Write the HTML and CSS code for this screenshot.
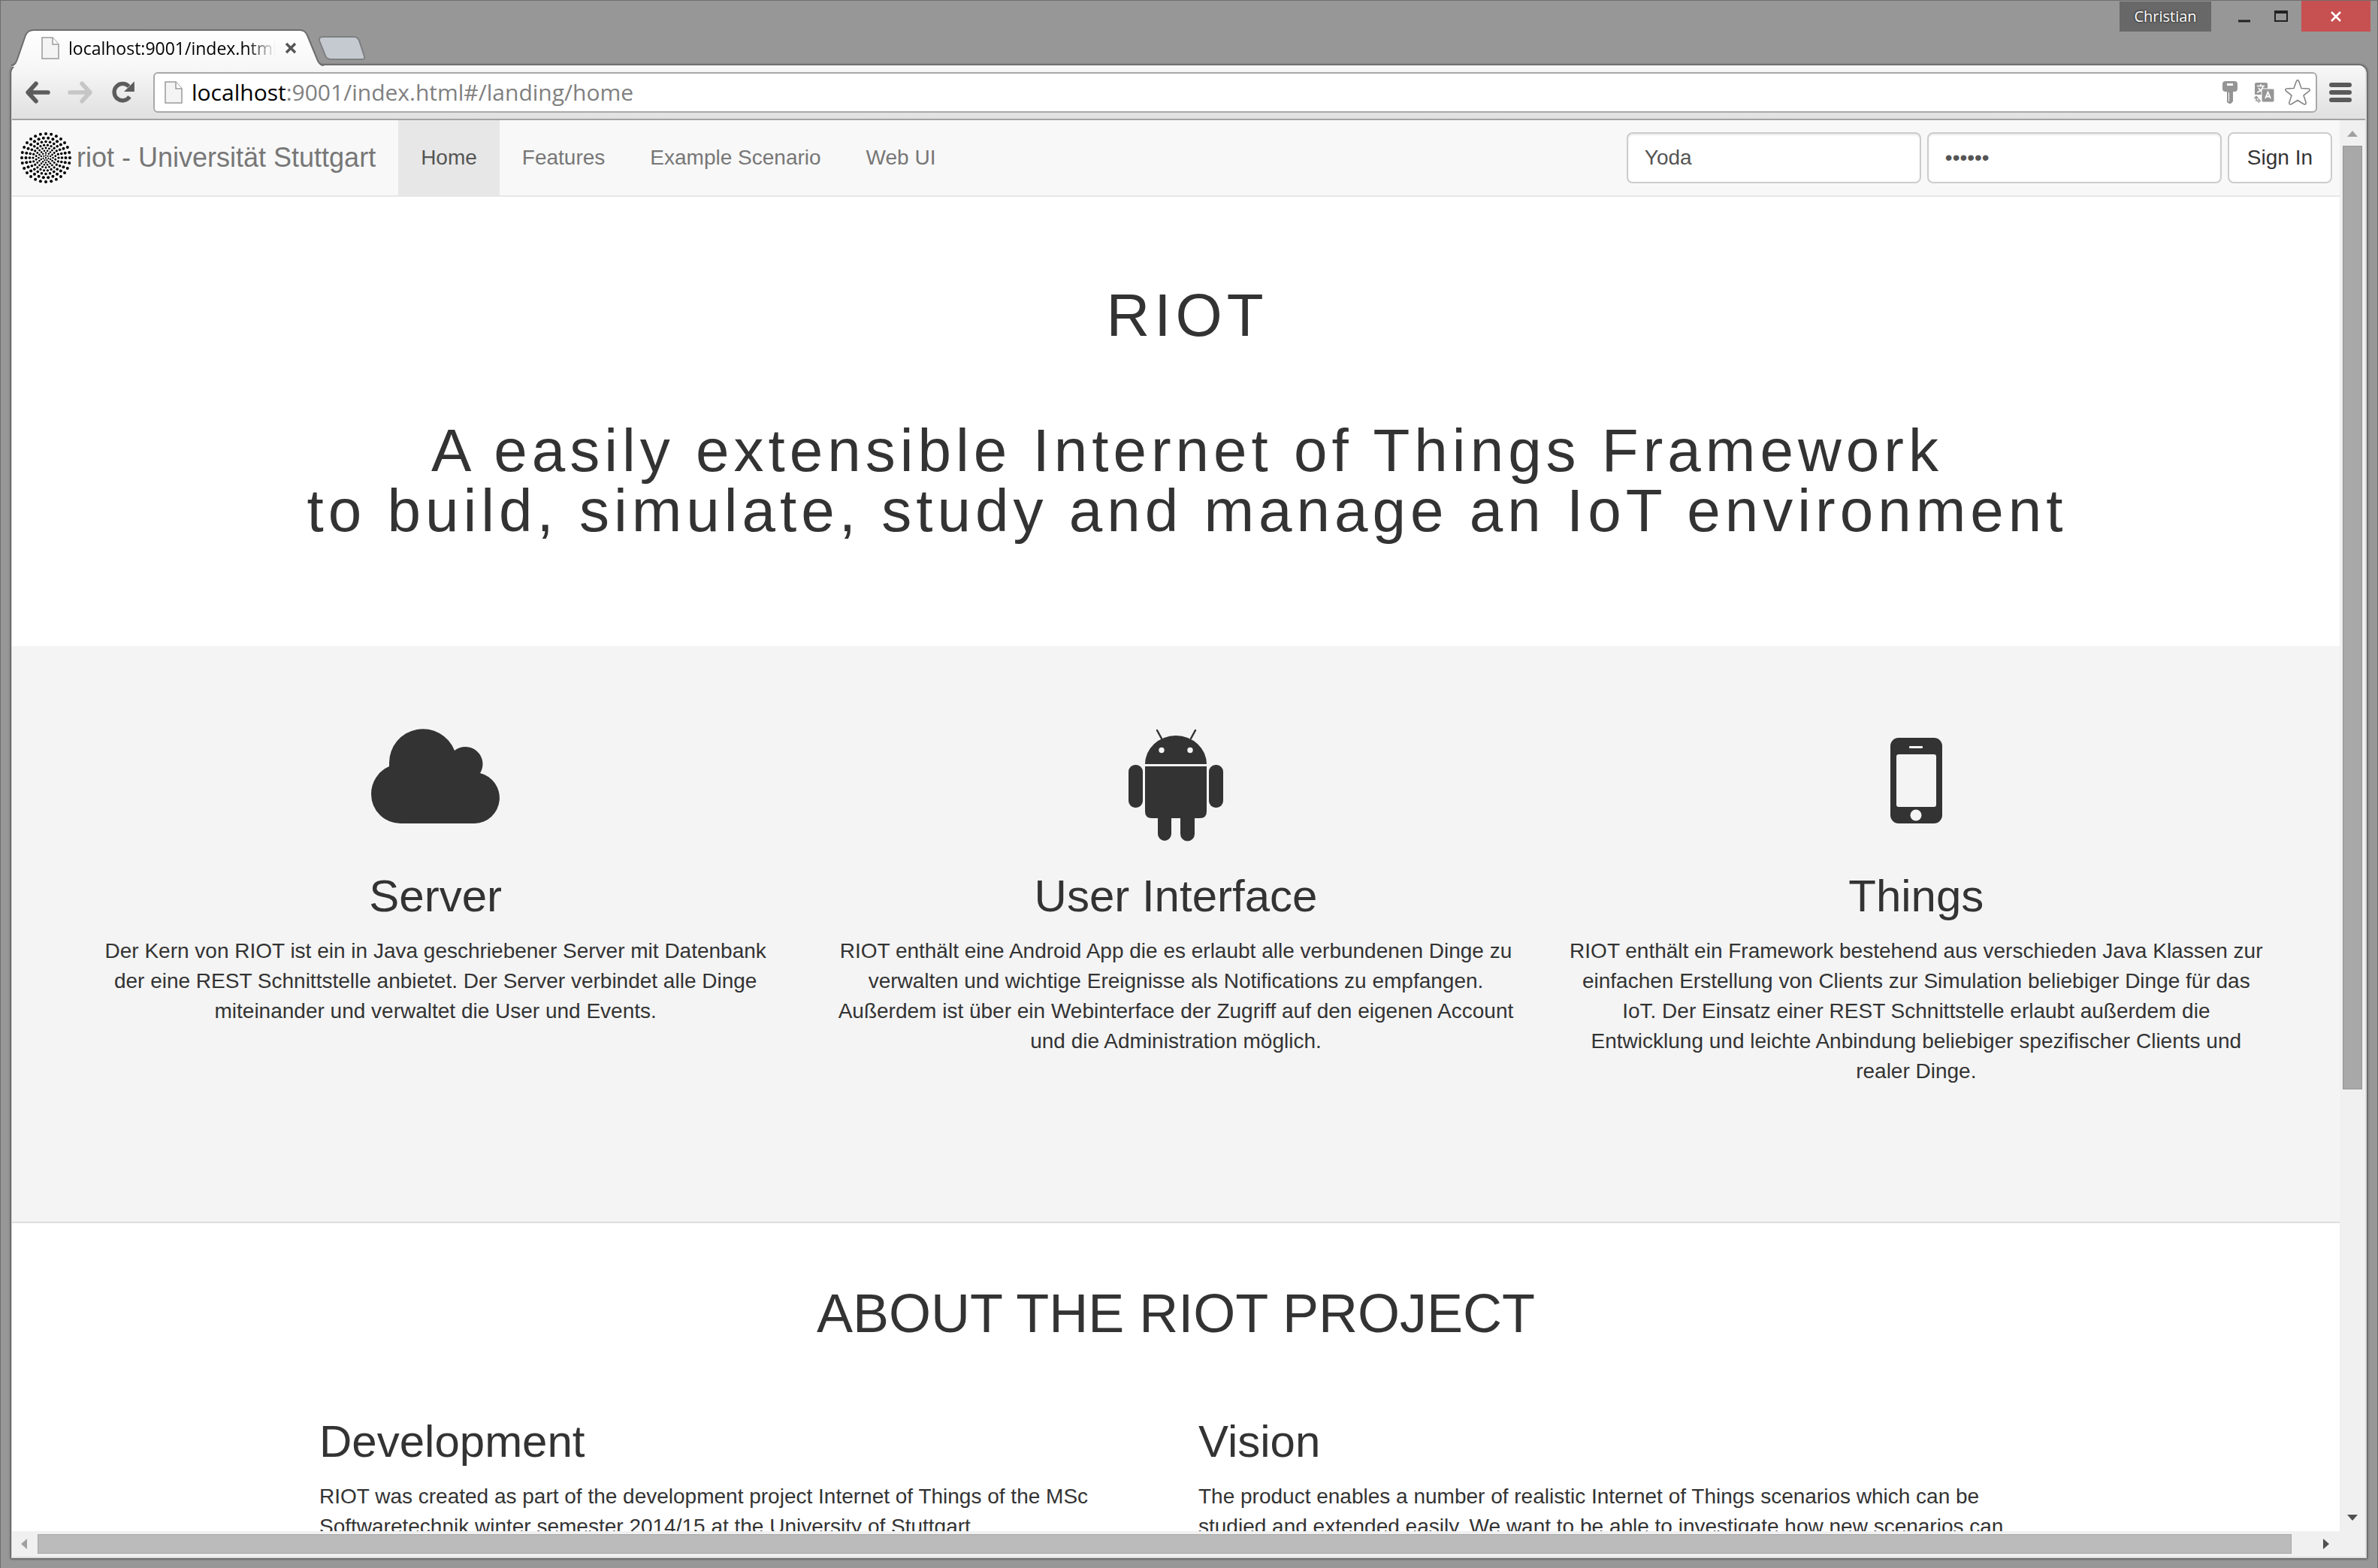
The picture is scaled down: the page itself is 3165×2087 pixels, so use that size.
FILE: index.html
```html
<!DOCTYPE html>
<html lang="de">
<head>
<meta charset="utf-8">
<title>riot - Universität Stuttgart</title>
<link rel="stylesheet" href="styles.css">
</head>
<body>
<div class="window">
  <header class="titlebar">
    <div class="tabs">
      <div class="tab">
        <svg class="tab-shape" viewBox="0 0 420 50" aria-hidden="true">
          <defs><linearGradient id="tabfill" x1="0" y1="0" x2="0" y2="1"><stop offset="0" stop-color="#fff"/><stop offset="1" stop-color="#f7f7f7"/></linearGradient></defs>
          <path d="M0 50C5 49 6 45 8 40L19 8Q22 1 30 1H384Q391 1 394 8L408 42Q411 49 416 50Z" fill="url(#tabfill)"/>
          <path d="M0 48C5 47 6 45 8 40L19 8Q22 1 30 1H384Q391 1 394 8L408 42Q411 48 416 48" fill="none" stroke="#6d6d6d" stroke-width="2"/>
        </svg>
        <svg class="page-icon" viewBox="0 0 24 30" aria-hidden="true"><path d="M1 1H15L23 10V29H1Z" fill="#f4f4f4" stroke="#9a9a9a" stroke-width="1.5"/><path d="M15 1V10H23" fill="#fff" stroke="#9a9a9a" stroke-width="1.5"/></svg>
        <span class="tab-title">localhost:9001/index.html#</span>
        <button class="tab-close" aria-label="Close tab"><svg viewBox="0 0 16 16"><path d="M2 2L14 14M14 2L2 14" stroke="#555" stroke-width="3.4"/></svg></button>
      </div>
      <button class="new-tab" aria-label="New tab"><svg viewBox="0 0 64 34"><path d="M7 2H48Q53 2 55 7L62 28Q63 32 59 32H18Q12 32 10 27L2 7Q1 2 7 2Z" fill="#c5cad1" stroke="#7d7f82" stroke-width="2"/></svg></button>
    </div>
    <div class="controls">
      <button class="user">Christian</button>
      <button class="ctl minimize" aria-label="Minimize"><svg viewBox="0 0 18 18"><path d="M1 16H17" stroke="#222" stroke-width="3"/></svg></button>
      <button class="ctl maximize" aria-label="Maximize"><svg viewBox="0 0 18 18"><path d="M1 3V16H17V3" fill="none" stroke="#222" stroke-width="2"/><path d="M0 4H18" stroke="#222" stroke-width="4"/></svg></button>
      <button class="close" aria-label="Close"><svg viewBox="0 0 14 14"><path d="M1 1L13 13M13 1L1 13" stroke="#fff" stroke-width="2.6"/></svg></button>
    </div>
  </header>

  <div class="frame">
    <div class="toolbar">
      <button class="tool" aria-label="Back"><svg viewBox="0 0 32 28"><path d="M14 3L4 14L14 25M4 14H29" fill="none" stroke="#5c5c5c" stroke-width="5.4" stroke-linecap="round" stroke-linejoin="round"/></svg></button>
      <button class="tool" aria-label="Forward"><svg viewBox="0 0 32 28"><path d="M18 3L28 14L18 25M28 14H3" fill="none" stroke="#c6c6c6" stroke-width="5.4" stroke-linecap="round" stroke-linejoin="round"/></svg></button>
      <button class="tool" aria-label="Reload"><svg viewBox="0 0 32 28"><path d="M24 19.500A10.500 10.500 0 1 1 23 6.500" fill="none" stroke="#5c5c5c" stroke-width="5"/><path d="M30 0V13H17Z" fill="#5c5c5c"/></svg></button>
      <div class="omnibox">
        <svg class="page-icon" viewBox="0 0 24 30" aria-hidden="true"><path d="M1 1H15L23 10V29H1Z" fill="#f4f4f4" stroke="#9a9a9a" stroke-width="1.5"/><path d="M15 1V10H23" fill="#fff" stroke="#9a9a9a" stroke-width="1.5"/></svg>
        <span class="url"><b>localhost</b>:9001/index.html#/landing/home</span>
        <svg class="key" viewBox="0 0 20 30" aria-hidden="true"><path fill-rule="evenodd" d="M4 0H16Q20 0 20 4V10Q20 14 16 14H14V27L11 30H9L6 28V14H4Q0 14 0 10V4Q0 0 4 0ZM6 3V6H14V3ZM8 15V27H9V15Z" fill="#949494"/></svg>
        <svg class="translate" viewBox="0 0 27 28" aria-hidden="true"><rect x="1" y="1" width="17" height="17" rx="2" fill="#969696"/><path d="M4 5.500H14M9 3V5.500M12 6Q10 12 4 14M6 8Q8 12 11 13" stroke="#fff" stroke-width="1.600" fill="none"/><path d="M0 17H10V28H0Z" fill="#fff"/><rect x="10" y="9" width="17" height="18" rx="2" fill="#969696" stroke="#fff"/><path d="M15 22L18.500 13.500L22 22M16.200 19.500H21" stroke="#fff" stroke-width="1.800" fill="none"/><path d="M3 19.500V25H6M0.500 22L3 19.500L5.500 22M5.500 22.500L8 25L5.500 27.500" stroke="#969696" stroke-width="1.600" fill="none"/></svg>
        <svg class="star" viewBox="0 0 36 36" aria-hidden="true"><path d="M16.300 3.300Q18 0 19.700 3.300L23 12.500L32 13Q36 13.500 33 16.500L26 22L29 31Q29.500 35 26 33.500L18 28.500L10 33.500Q6 35 7 31L10 22L3 16.500Q0 13.500 4 13L13 12.500Z" fill="#fff" stroke="#858585" stroke-width="1.600"/></svg>
      </div>
      <button class="menu" aria-label="Menu"><svg viewBox="0 0 30 26"><path d="M3 3H27M3 13H27M3 23H27" stroke="#5a5a5a" stroke-width="6" stroke-linecap="round"/></svg></button>
    </div>

    <div class="viewport">
      <div class="page">
        <nav class="navbar">
          <a class="brand" href="#home">
            <svg id="logo" class="logo" viewBox="-34 -34 68 68" aria-hidden="true"></svg>
            riot - Universität Stuttgart
          </a>
          <a class="nav-link active" href="#home">Home</a>
          <a class="nav-link" href="#features">Features</a>
          <a class="nav-link" href="#scenario">Example Scenario</a>
          <a class="nav-link" href="#webui">Web UI</a>
          <form class="login">
            <input class="field" type="text" value="Yoda" aria-label="Username">
            <input class="field" type="password" value="123456" aria-label="Password">
            <button class="signin" type="button">Sign In</button>
          </form>
        </nav>

        <section class="hero">
          <h1>RIOT</h1>
          <p>A easily extensible Internet of Things Framework<br>to build, simulate, study and manage an IoT environment</p>
        </section>

        <section class="parts">
          <article class="part">
            <svg class="part-icon" viewBox="0 0 172 150" aria-hidden="true"><path d="M39 126A39 39 0 0 1 0 87A40 40 0 0 1 24 50V45A45 45 0 0 1 111 29A23 23 0 0 1 145 59A34 34 0 0 1 138 126Z" fill="#333"/></svg>
            <h2>Server</h2>
            <p>Der Kern von RIOT ist ein in Java geschriebener Server mit Datenbank der eine REST Schnittstelle anbietet. Der Server verbindet alle Dinge miteinander und verwaltet die User und Events.</p>
          </article>
          <article class="part">
            <svg class="part-icon" viewBox="-23 0 172 150" aria-hidden="true"><g fill="#333"><path d="M22 47A41 38 0 0 1 104 47Z"/><path d="M22 50H104V110Q104 119 95 119H31Q22 119 22 110Z"/><rect x="0" y="48" width="19" height="57" rx="9"/><rect x="107" y="48" width="19" height="57" rx="9"/><path d="M39 115H57V140A9 9 0 0 1 39 140ZM69 115H88V140A9 9 0 0 1 69 140Z"/></g><path d="M38 2L44 13M89 2L83 13" stroke="#333" stroke-width="2.500" stroke-linecap="round"/><circle cx="44" cy="28.500" r="3.700" fill="#f4f4f4"/><circle cx="82" cy="28.500" r="3.700" fill="#f4f4f4"/></svg>
            <h2>User Interface</h2>
            <p>RIOT enthält eine Android App die es erlaubt alle verbundenen Dinge zu verwalten und wichtige Ereignisse als Notifications zu empfangen. Außerdem ist über ein Webinterface der Zugriff auf den eigenen Account und die Administration möglich.</p>
          </article>
          <article class="part">
            <svg class="part-icon" viewBox="-52 -12 172 150" aria-hidden="true"><rect width="69" height="114" rx="11" fill="#333"/><g fill="#f4f4f4"><rect x="8" y="22" width="53" height="70" rx="3"/><rect x="25" y="11" width="18" height="3" rx="1"/><circle cx="34" cy="103" r="7.500"/></g></svg>
            <h2>Things</h2>
            <p>RIOT enthält ein Framework bestehend aus verschieden Java Klassen zur einfachen Erstellung von Clients zur Simulation beliebiger Dinge für das IoT. Der Einsatz einer REST Schnittstelle erlaubt außerdem die Entwicklung und leichte Anbindung beliebiger spezifischer Clients und realer Dinge.</p>
          </article>
        </section>

        <section class="about">
          <h2 class="about-title">ABOUT THE RIOT PROJECT</h2>
          <div class="about-columns">
            <article>
              <h2>Development</h2>
              <p>RIOT was created as part of the development project Internet of Things of the MSc Softwaretechnik winter semester 2014/15 at the University of Stuttgart.</p>
            </article>
            <article>
              <h2>Vision</h2>
              <p>The product enables a number of realistic Internet of Things scenarios which can be studied and extended easily. We want to be able to investigate how new scenarios can</p>
            </article>
          </div>
        </section>
      </div>

      <div class="vscroll"><i class="arrow up"></i><div class="vtrack"><div class="vthumb" style="height: 69.4%"></div></div><i class="arrow down"></i></div>
      <div class="hscroll"><i class="arrow left"></i><div class="hthumb"></div><i class="arrow right"></i></div>
      <div class="corner"></div>
    </div>
  </div>
</div>
<script src="logo.js"></script>
</body>
</html>
```
FILE: logo.js
```js
// Dotted disc: rings of dots given as [radius, number of dots, dot radius]
var logo = document.getElementById('logo');
var rings = [
  [32, 28, 2], [26.5, 26, 2], [21.5, 24, 1.8], [17, 22, 1.6],
  [13, 18, 1.4], [9.5, 14, 1.3], [6.5, 10, 1.2], [3.5, 7, 1.1], [0.5, 2, 1]
];
rings.forEach(function (ring, index) {
  for (var i = 0; i < ring[1]; i++) {
    var angle = (i + (index % 2 ? 0.5 : 0)) * 2 * Math.PI / ring[1];
    var dot = document.createElementNS('http://www.w3.org/2000/svg', 'circle');
    dot.setAttribute('cx', (ring[0] * Math.sin(angle)).toFixed(2));
    dot.setAttribute('cy', (ring[0] * Math.cos(angle)).toFixed(2));
    dot.setAttribute('r', ring[2]);
    logo.appendChild(dot);
  }
});
```
FILE: styles.css
```css
* { box-sizing: border-box; }

body {
  margin: 0;
  background: #979797;
  color: #333;
  font: 28px/40px "Liberation Sans", Arial, sans-serif;
}

h1, h2, p { margin: 0; font-weight: 400; }
a { color: inherit; text-decoration: none; }
svg { display: block; }
button { font: inherit; color: inherit; border: 0; padding: 0; background: none; }

/* Browser window */
.window {
  display: flex;
  flex-direction: column;
  height: 100vh;
  padding: 0 14px 13px;
  border: 1px solid #6e6e6e;
  border-bottom: 0;
  background: #979797;
}

.titlebar {
  display: flex;
  justify-content: space-between;
  height: 86px;
  margin-right: -5px;
}

.tabs { display: flex; align-items: flex-end; }

.tab {
  position: relative;
  z-index: 1;
  display: flex;
  align-items: center;
  width: 420px;
  height: 50px;
  margin-bottom: -2px;
  padding: 0 24px 0 40px;
  gap: 12px;
}

.tab-shape { position: absolute; inset: 0; width: 100%; height: 100%; }
.tab > :not(.tab-shape) { position: relative; }
.page-icon { flex: none; width: 24px; height: 30px; }

.tab-title {
  flex: none;
  width: 276px;
  overflow: hidden;
  white-space: nowrap;
  font: 23px/32px "Open Sans", sans-serif;
  color: #000;
  mask-image: linear-gradient(to right, #000 86%, transparent);
}

.tab-close svg { width: 16px; height: 16px; }
.new-tab { margin: 0 0 6px -26px; padding-left: 14px; }
.new-tab svg { width: 64px; height: 34px; }

.controls { display: flex; align-items: flex-start; }

.user {
  height: 40px;
  width: 122px;
  margin-top: 1px;
  background: #686868;
  color: #fff;
  font: 20px/40px "Open Sans", sans-serif;
  text-shadow: 0 0 3px #000;
}

.ctl { display: flex; justify-content: center; width: 54px; padding-top: 11px; }
.ctl svg { width: 18px; height: 18px; }
.minimize { padding-left: 22px; width: 66px; }
.close {
  display: grid;
  place-items: center;
  width: 92px;
  height: 41px;
  background: #c75050;
}
.close svg { width: 14px; height: 14px; }

.frame {
  flex: 1;
  min-height: 0;
  display: flex;
  flex-direction: column;
  border: 2px solid #dcdcdc;
  border-width: 0 2px 2px 1px;
  border-radius: 10px 10px 0 0;
  background: #fff;
  box-shadow: 0 0 3px 1px #444;
}

.toolbar {
  display: flex;
  align-items: center;
  height: 73px;
  padding: 1px 18px 0 17px;
  border-bottom: 2px solid #a3a3a3;
  border-radius: 10px 10px 0 0;
  background: linear-gradient(#f8f8f8, #e0e0e0);
}

.tool { width: 57px; }
.tool svg { width: 34px; height: 30px; }

.omnibox {
  flex: 1;
  display: flex;
  align-items: center;
  height: 54px;
  margin-right: 16px;
  padding: 0 6px 0 13px;
  border: 2px solid #a9a9a9;
  border-radius: 6px;
  background: #fff;
}

.url {
  flex: 1;
  margin-left: 12px;
  font: 30px/44px "Open Sans", sans-serif;
  color: #808080;
}
.url b { font-weight: 400; color: #000; }
.key { width: 20px; height: 30px; margin-right: 22px; }
.translate { width: 27px; height: 28px; margin-right: 13px; }
.star { width: 36px; height: 36px; }
.menu svg { width: 30px; height: 26px; }

/* Scrolling area */
.viewport {
  flex: 1;
  min-height: 0;
  display: grid;
  grid-template: minmax(0, 1fr) 34px / minmax(0, 1fr) 34px;
}

.page { overflow: hidden; }

.vscroll, .hscroll, .corner { background: #f0f0f0; }
.vscroll { display: flex; flex-direction: column; align-items: center; padding: 14px 0; }
.hscroll { display: flex; align-items: center; padding: 0 14px 0 12px; gap: 14px; }
.vtrack { flex: 1; margin: 12px 0; width: 26px; }
.vthumb { background: #a8a8a8; border: 1px solid #959595; }
.hthumb { flex: 1; height: 26px; margin-right: 28px; background: #bbb; border: 1px solid #a6a6a6; }

.arrow { border: 7px solid transparent; }
.up { border-width: 0 7px 8px; border-bottom-color: #a0a0a0; }
.down { border-width: 8px 7px 0; border-top-color: #505050; }
.left { border-width: 7px 8px 7px 0; border-right-color: #a0a0a0; }
.right { border-width: 7px 0 7px 8px; border-left-color: #505050; }

/* Site navigation */
.navbar {
  display: flex;
  height: 102px;
  padding-right: 10px;
  border-bottom: 2px solid #e7e7e7;
  background: #f8f8f8;
  color: #777;
}

.brand {
  display: flex;
  align-items: center;
  gap: 7px;
  padding: 0 30px 0 11px;
  font-size: 36px;
}
.logo { width: 68px; height: 68px; }

.nav-link { padding: 30px; }
.nav-link.active { background: #e7e7e7; color: #555; }

.login { display: flex; align-items: center; gap: 8px; margin-left: auto; }
.field, .signin {
  height: 68px;
  padding: 0 24px;
  border: 2px solid #ccc;
  border-radius: 8px;
  background: #fff;
  font: inherit;
}
.field { width: 392px; padding: 0 22px; color: #555; box-shadow: inset 0 2px 2px rgba(0, 0, 0, .075); }
.signin { color: #333; }

/* Hero */
.hero {
  display: flex;
  flex-direction: column;
  gap: 100px;
  margin-right: -30px;
  padding: 118px 0 140px;
  text-align: center;
}
.hero h1, .hero p { font-size: 80px; line-height: 80px; letter-spacing: 6px; }

h2 { font-size: 60px; line-height: 66px; margin-bottom: 20px; }

/* Three parts */
.parts {
  display: grid;
  grid-template-columns: repeat(3, 1fr);
  padding: 110px 71px 180px;
  border-bottom: 2px solid #ddd;
  background: #f4f4f4;
  text-align: center;
}
.part { padding: 0 30px; }
.part-icon { width: 172px; height: 150px; margin: 0 auto 40px; }

/* About */
.about { max-width: 2340px; margin: 0 auto; padding-top: 80px; }
.about-title { margin-bottom: 98px; font-size: 72px; line-height: 80px; text-align: center; }
.about-columns { display: grid; grid-template-columns: 1fr 1fr; }
.about-columns article { padding: 0 30px; }
```
